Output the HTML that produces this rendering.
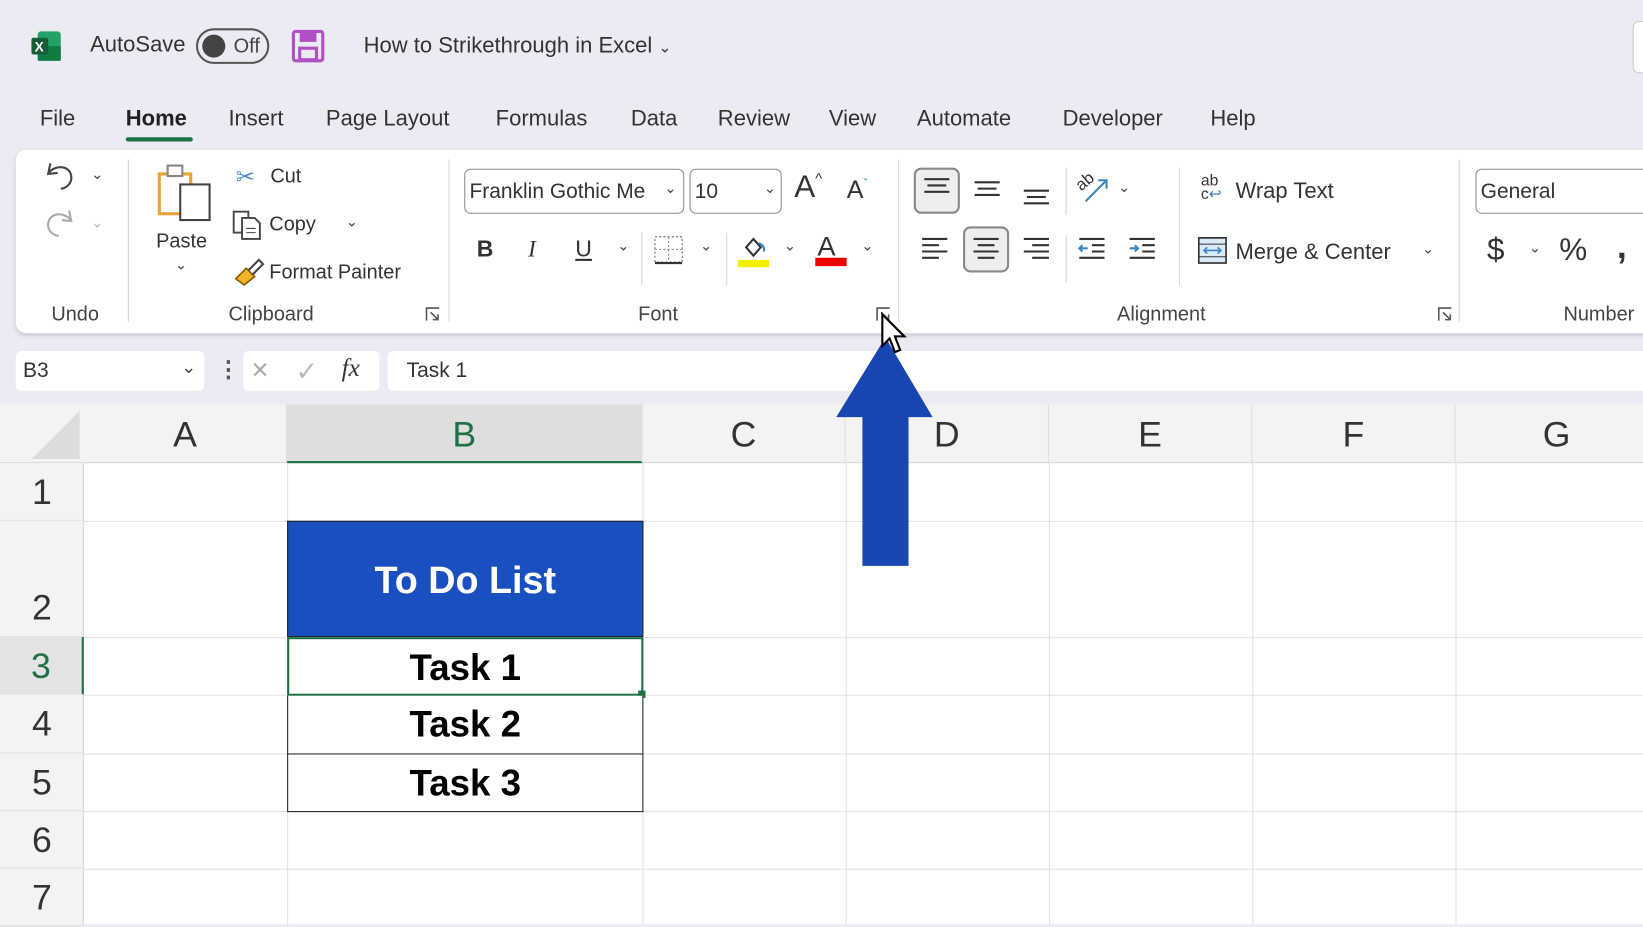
<!DOCTYPE html>
<html><head><meta charset="utf-8"><style>
*{margin:0;padding:0;box-sizing:border-box}
body{width:1643px;height:924px;overflow:hidden;background:#ebebf3;font-family:"Liberation Sans",sans-serif;color:#222}
#w{position:absolute;left:0;top:0;width:1568px;height:882px;transform:scale(1.0479);transform-origin:0 0;background:#ebebf3}
.a{position:absolute;white-space:nowrap}
.t{font-size:21px;color:#333}
.sm{font-size:19px;color:#444}
.sep{position:absolute;width:1px;background:#d6d6d6}
.box{position:absolute;border:1.5px solid #8a8a8a;border-radius:6px;background:#fff}
.chev{font-size:14px;color:#444}
.col{position:absolute;top:386px;height:56px;font-size:34px;color:#333;text-align:center;line-height:58px;border-right:1px solid #ddd}
.row{position:absolute;left:0;width:80px;font-size:34px;color:#333;text-align:center;border-bottom:1px solid #e2e2e2}
.hl{position:absolute;left:80px;right:0;height:1px;background:#e2e2e2}
.vl{position:absolute;top:442px;bottom:0;width:1px;background:#e2e2e2}
.task{position:absolute;left:274px;width:340px;border:1.5px solid #222;border-top:none;background:#fff;font-weight:bold;font-size:35px;text-align:center;color:#000}
</style></head><body><div id="w">
<!-- title bar -->
<svg class="a" style="left:28px;top:28px" width="32" height="32"><rect x="8" y="2" width="22" height="28" rx="3" fill="#21a366"/><rect x="8" y="16" width="22" height="14" fill="#107c41"/><rect x="2" y="8" width="16" height="16" rx="2" fill="#185c37"/><text x="5" y="21" font-size="13" font-weight="bold" fill="#fff" font-family="Liberation Sans">X</text></svg>
<div class="a t" style="left:86px;top:31px">AutoSave</div>
<div class="a" style="left:187px;top:27px;width:70px;height:34px;border:2px solid #555;border-radius:17px"><div style="position:absolute;left:4px;top:4px;width:22px;height:22px;border-radius:50%;background:#444"></div><span style="position:absolute;left:34px;top:5px;font-size:19px;color:#444">Off</span></div>
<svg class="a" style="left:278px;top:28px" width="32" height="32"><rect x="2" y="2" width="28" height="28" rx="2" fill="none" stroke="#b14fc5" stroke-width="3"/><rect x="8" y="3" width="16" height="9" fill="#b14fc5"/><rect x="8" y="18" width="16" height="11" fill="none" stroke="#b14fc5" stroke-width="3"/></svg>
<div class="a t" style="left:347px;top:32px">How to Strikethrough in Excel <span style="font-size:15px">&#8964;</span></div>
<div class="a" style="left:1558px;top:20px;width:20px;height:50px;background:#fff;border:1px solid #ccc;border-radius:6px"></div>
<!-- tabs -->
<div class="a t" style="left:38px;top:102px">File</div>
<div class="a t" style="left:120px;top:102px;color:#222;font-weight:bold">Home</div>
<div class="a" style="left:120px;top:131px;width:64px;height:4px;background:#1e7145;border-radius:2px"></div>
<div class="a t" style="left:218px;top:102px">Insert</div>
<div class="a t" style="left:311px;top:102px">Page Layout</div>
<div class="a t" style="left:473px;top:102px">Formulas</div>
<div class="a t" style="left:602px;top:102px">Data</div>
<div class="a t" style="left:685px;top:102px">Review</div>
<div class="a t" style="left:791px;top:102px">View</div>
<div class="a t" style="left:875px;top:102px">Automate</div>
<div class="a t" style="left:1014px;top:102px">Developer</div>
<div class="a t" style="left:1155px;top:102px">Help</div>
<!-- ribbon -->
<div class="a" style="left:15px;top:143px;width:1580px;height:175px;background:#fff;border-radius:10px;box-shadow:0 2px 4px rgba(0,0,0,.15)"></div>
<!-- undo -->
<svg class="a" style="left:40px;top:150px" width="34" height="34"><path d="M8 6 L6 16 L15 15 M6 16 C10 8 26 6 28 18 C29 26 22 30 18 30" fill="none" stroke="#444" stroke-width="2"/></svg>
<div class="a chev" style="left:87px;top:158px">&#8964;</div>
<svg class="a" style="left:40px;top:195px" width="34" height="34"><path d="M26 6 L28 16 L19 15 M28 16 C24 8 8 6 6 18 C5 26 12 30 16 30" fill="none" stroke="#aaa" stroke-width="2"/></svg>
<div class="a chev" style="left:87px;top:204px;color:#bbb">&#8964;</div>
<div class="a sm" style="left:49px;top:290px">Undo</div>
<div class="sep" style="left:122px;top:152px;height:155px"></div>
<!-- clipboard -->
<svg class="a" style="left:148px;top:154px" width="58" height="60"><rect x="4" y="12" width="30" height="38" fill="none" stroke="#e8a33a" stroke-width="3"/><rect x="12" y="4" width="14" height="10" fill="#fff" stroke="#888" stroke-width="2"/><rect x="24" y="22" width="28" height="34" fill="#fff" stroke="#444" stroke-width="2"/></svg>
<div class="a sm" style="left:149px;top:220px;color:#333">Paste</div>
<div class="a chev" style="left:167px;top:244px">&#8964;</div>
<div class="a" style="left:225px;top:156px;font-size:22px;color:#4a8cc9">&#9986;</div>
<div class="a sm" style="left:258px;top:158px;color:#333">Cut</div>
<svg class="a" style="left:221px;top:200px" width="30" height="30"><rect x="2" y="2" width="14" height="20" fill="none" stroke="#444" stroke-width="1.8"/><path d="M10 8 H22 L27 13 V28 H10 Z" fill="#fff" stroke="#444" stroke-width="1.8"/><path d="M14 18h9M14 22h9" stroke="#444"/></svg>
<div class="a sm" style="left:257px;top:204px;color:#333">Copy</div>
<div class="a chev" style="left:330px;top:203px">&#8964;</div>
<svg class="a" style="left:221px;top:244px" width="32" height="30"><path d="M4 22 L14 12 L22 20 L12 28 Z" fill="#f0b429" stroke="#8a5b00" stroke-width="1.5"/><path d="M16 14 L26 4 L30 8 L20 18" fill="none" stroke="#444" stroke-width="2"/></svg>
<div class="a sm" style="left:257px;top:250px;color:#333">Format Painter</div>
<div class="a sm" style="left:218px;top:290px">Clipboard</div>
<svg class="a" style="left:405px;top:292px" width="16" height="16"><path d="M2 14V2h12" fill="none" stroke="#555" stroke-width="1.5"/><path d="M6 6 L13 13 M13 8V13H8" fill="none" stroke="#555" stroke-width="1.5"/></svg>
<div class="sep" style="left:428px;top:152px;height:155px"></div>
<!-- font -->
<div class="box" style="left:443px;top:161px;width:210px;height:43px"><span class="a" style="left:4px;top:10px;font-size:20px;color:#333">Franklin Gothic Me</span><span class="a chev" style="left:190px;top:9px">&#8964;</span></div>
<div class="box" style="left:658px;top:161px;width:88px;height:43px"><span class="a" style="left:4px;top:10px;font-size:20px;color:#333">10</span><span class="a chev" style="left:70px;top:9px">&#8964;</span></div>
<div class="a" style="left:758px;top:162px;font-size:30px;color:#333">A<span style="font-size:14px;vertical-align:top">^</span></div>
<div class="a" style="left:808px;top:168px;font-size:24px;color:#333">A<span style="font-size:12px;vertical-align:top;color:#3a85c4">&#711;</span></div>
<div class="a" style="left:455px;top:225px;font-size:22px;font-weight:bold;color:#333">B</div>
<div class="a" style="left:504px;top:225px;font-size:22px;font-style:italic;font-family:'Liberation Serif',serif;color:#333">I</div>
<div class="a" style="left:549px;top:225px;font-size:22px;text-decoration:underline;color:#333">U</div>
<div class="a chev" style="left:589px;top:226px">&#8964;</div>
<div class="sep" style="left:612px;top:222px;height:50px"></div>
<svg class="a" style="left:623px;top:224px" width="30" height="30"><rect x="2" y="2" width="26" height="24" fill="none" stroke="#666" stroke-dasharray="2 2"/><path d="M15 2v24M2 14h26" stroke="#888" stroke-dasharray="2 2"/><path d="M2 27h26" stroke="#333" stroke-width="2"/></svg>
<div class="a chev" style="left:668px;top:226px">&#8964;</div>
<div class="sep" style="left:693px;top:222px;height:50px"></div>
<svg class="a" style="left:704px;top:222px" width="32" height="34"><path d="M8 14 L15 6 L22 14 L15 22 Z" fill="none" stroke="#333" stroke-width="2"/><path d="M20 10 q6 2 5 8" fill="none" stroke="#3a85c4" stroke-width="2"/><rect x="0" y="26" width="30" height="7" fill="#f4f000"/></svg>
<div class="a chev" style="left:748px;top:226px">&#8964;</div>
<div class="a" style="left:780px;top:220px;font-size:26px;color:#333">A</div>
<div class="a" style="left:778px;top:246px;width:30px;height:8px;background:#e00"></div>
<div class="a chev" style="left:822px;top:226px">&#8964;</div>
<div class="a sm" style="left:609px;top:290px">Font</div>
<svg class="a" style="left:835px;top:292px" width="16" height="16"><path d="M2 14V2h12" fill="none" stroke="#555" stroke-width="1.5"/><path d="M6 6 L13 13 M13 8V13H8" fill="none" stroke="#555" stroke-width="1.5"/></svg>
<div class="sep" style="left:857px;top:152px;height:155px"></div>
<!-- alignment -->
<div class="a" style="left:872px;top:160px;width:44px;height:44px;border:2px solid #888;border-radius:7px;background:#eee"></div>
<svg class="a" style="left:878px;top:168px" width="32" height="24"><path d="M4 3h24M7 9h18M4 15h24" stroke="#333" stroke-width="2"/></svg>
<svg class="a" style="left:926px;top:168px" width="32" height="24"><path d="M4 6h24M7 12h18M4 18h24" stroke="#333" stroke-width="2"/></svg>
<svg class="a" style="left:973px;top:172px" width="32" height="24"><path d="M4 10h24M7 16h18M4 22h24" stroke="#333" stroke-width="2"/></svg>
<div class="sep" style="left:1017px;top:160px;height:45px"></div>
<div class="a" style="left:1027px;top:165px;font-size:16px;color:#333;transform:rotate(-40deg)">ab</div>
<svg class="a" style="left:1030px;top:166px" width="30" height="30"><path d="M6 26 L26 6 M18 6h8v8" fill="none" stroke="#3a85c4" stroke-width="2"/></svg>
<div class="a chev" style="left:1067px;top:170px">&#8964;</div>
<svg class="a" style="left:876px;top:224px" width="32" height="28"><path d="M4 4h24M4 10h16M4 16h24M4 22h16" stroke="#333" stroke-width="2"/></svg>
<div class="a" style="left:919px;top:216px;width:44px;height:44px;border:2px solid #888;border-radius:7px;background:#eee"></div>
<svg class="a" style="left:925px;top:224px" width="32" height="28"><path d="M4 4h24M8 10h16M4 16h24M8 22h16" stroke="#333" stroke-width="2"/></svg>
<svg class="a" style="left:973px;top:224px" width="32" height="28"><path d="M4 4h24M12 10h16M4 16h24M12 22h16" stroke="#333" stroke-width="2"/></svg>
<div class="sep" style="left:1017px;top:225px;height:45px"></div>
<svg class="a" style="left:1026px;top:224px" width="32" height="28"><path d="M4 4h24M16 10h12M16 16h12M4 22h24" stroke="#333" stroke-width="2"/><path d="M12 13H4M7 10l-3 3 3 3" fill="none" stroke="#3a85c4" stroke-width="2"/></svg>
<svg class="a" style="left:1074px;top:224px" width="32" height="28"><path d="M4 4h24M16 10h12M16 16h12M4 22h24" stroke="#333" stroke-width="2"/><path d="M4 13h8M9 10l3 3-3 3" fill="none" stroke="#3a85c4" stroke-width="2"/></svg>
<div class="sep" style="left:1125px;top:160px;height:112px"></div>
<div class="a" style="left:1146px;top:166px;font-size:15px;line-height:13px;color:#333">ab<br>c<span style="color:#3a85c4">&#8617;</span></div>
<div class="a t" style="left:1179px;top:171px">Wrap Text</div>
<svg class="a" style="left:1142px;top:225px" width="30" height="28"><rect x="2" y="2" width="26" height="24" fill="#dbeaf7" stroke="#333" stroke-width="1.6"/><path d="M2 8h26M2 20h26" stroke="#333"/><path d="M7 14h16M10 11l-3 3 3 3M20 11l3 3-3 3" fill="none" stroke="#3a85c4" stroke-width="1.6"/></svg>
<div class="a t" style="left:1179px;top:229px">Merge &amp; Center</div>
<div class="a chev" style="left:1357px;top:229px">&#8964;</div>
<div class="a sm" style="left:1066px;top:290px">Alignment</div>
<svg class="a" style="left:1371px;top:292px" width="16" height="16"><path d="M2 14V2h12" fill="none" stroke="#555" stroke-width="1.5"/><path d="M6 6 L13 13 M13 8V13H8" fill="none" stroke="#555" stroke-width="1.5"/></svg>
<div class="sep" style="left:1392px;top:152px;height:155px"></div>
<!-- number -->
<div class="box" style="left:1408px;top:161px;width:200px;height:43px"><span class="a" style="left:4px;top:10px;font-size:20px;color:#333">General</span></div>
<div class="a" style="left:1419px;top:222px;font-size:30px;color:#333">$</div>
<div class="a chev" style="left:1459px;top:228px">&#8964;</div>
<div class="a" style="left:1488px;top:222px;font-size:30px;color:#333">%</div>
<div class="a" style="left:1543px;top:216px;font-size:34px;font-weight:bold;color:#333">,</div>
<div class="a sm" style="left:1492px;top:290px">Number</div>
<!-- formula bar -->
<div class="a" style="left:15px;top:335px;width:180px;height:38px;background:#fff;border-radius:5px"><span class="a" style="left:7px;top:8px;font-size:20px;color:#333">B3</span><span class="a chev" style="left:158px;top:6px;font-size:17px">&#8964;</span></div>
<div class="a" style="left:207px;top:340px;font-size:22px;color:#555;font-weight:bold">&#8942;</div>
<div class="a" style="left:232px;top:335px;width:130px;height:38px;background:#fff;border-radius:5px"><span class="a" style="left:8px;top:2px;font-size:28px;color:#aaa">&#215;</span><span class="a" style="left:50px;top:4px;font-size:26px;color:#bbb">&#10003;</span><span class="a" style="left:94px;top:4px;font-size:24px;font-style:italic;font-family:'Liberation Serif',serif;color:#333">fx</span></div>
<div class="a" style="left:370px;top:335px;width:1220px;height:38px;background:#fff;border-radius:5px"><span class="a" style="left:18px;top:8px;font-size:20px;color:#333">Task 1</span></div>
<!-- grid -->
<div class="a" style="left:0;top:386px;width:1568px;height:496px;background:#fff"></div>
<div class="a" style="left:0;top:386px;width:1568px;height:56px;background:#f3f3f3;border-bottom:1px solid #d8d8d8"></div>
<div class="a" style="left:0;top:442px;width:80px;height:440px;background:#f3f3f3;border-right:1px solid #d8d8d8"></div>
<svg class="a" style="left:28px;top:392px" width="50" height="48"><path d="M48 0V46H2Z" fill="#dcdcdc"/></svg>
<div class="col" style="left:80px;width:194px">A</div>
<div class="col" style="left:274px;width:339px;background:#dedede;color:#1e7145;border-bottom:2px solid #1e7145">B</div>
<div class="col" style="left:613px;width:194px">C</div>
<div class="col" style="left:807px;width:194px">D</div>
<div class="col" style="left:1001px;width:194px">E</div>
<div class="col" style="left:1195px;width:194px">F</div>
<div class="col" style="left:1389px;width:194px">G</div>
<div class="hl" style="top:497px"></div><div class="hl" style="top:608px"></div><div class="hl" style="top:663px"></div><div class="hl" style="top:719px"></div><div class="hl" style="top:774px"></div><div class="hl" style="top:829px"></div>
<div class="vl" style="left:274px"></div><div class="vl" style="left:613px"></div><div class="vl" style="left:807px"></div><div class="vl" style="left:1001px"></div><div class="vl" style="left:1195px"></div><div class="vl" style="left:1389px"></div>
<div class="row" style="top:442px;height:55px;line-height:56px">1</div>
<div class="row" style="top:497px;height:111px;line-height:166px">2</div>
<div class="row" style="top:608px;height:55px;line-height:56px;background:#e3e3e3;color:#1e7145;border-right:2px solid #1e7145">3</div>
<div class="row" style="top:663px;height:56px;line-height:56px">4</div>
<div class="row" style="top:719px;height:55px;line-height:56px">5</div>
<div class="row" style="top:774px;height:55px;line-height:56px">6</div>
<div class="row" style="top:829px;height:55px;line-height:56px">7</div>
<div class="a" style="left:274px;top:497px;width:340px;height:111px;background:#1a4fbf;border:1.5px solid #222;color:#fff;font-weight:bold;font-size:36px;text-align:center;line-height:112px">To Do List</div>
<div class="task" style="top:608px;height:56px;line-height:56px;border:2px solid #1e7145">Task 1</div>
<div class="a" style="left:609px;top:659px;width:7px;height:7px;background:#1e7145"></div>
<div class="task" style="top:664px;height:56px;line-height:56px">Task 2</div>
<div class="task" style="top:720px;height:55px;line-height:55px">Task 3</div>
<!-- arrow -->
<svg class="a" style="left:790px;top:290px" width="110" height="255"><path d="M55 32 L100 108 L77 108 L77 250 L33 250 L33 108 L8 108 Z" fill="#1746b0"/><path d="M52 10 L52 40 L59 33 L64 46 L69 44 L64 31 L73 31 Z" fill="#fff" stroke="#000" stroke-width="2"/></svg>
</div></body></html>
